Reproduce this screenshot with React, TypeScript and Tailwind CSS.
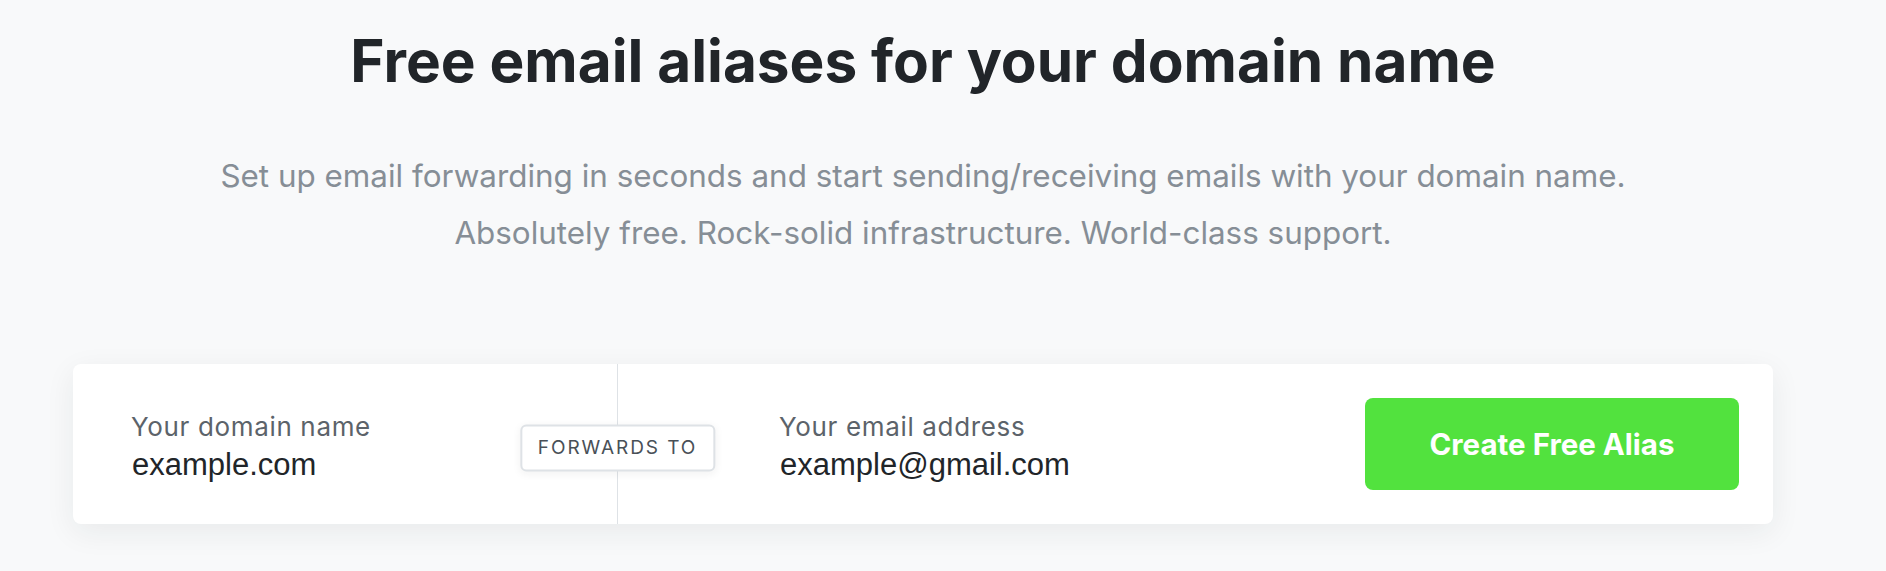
import React from 'react';

const inter = { fontFamily: 'Inter, "Noto Sans", sans-serif' };

function Field({ label, placeholder }: { label: string; placeholder: string }) {
    return (
        <div className="flex flex-col justify-center pt-[6px]">
            <label className="text-[26px] leading-[36px] tracking-[0.025em] text-[#5c636a]">{label}</label>
            <input
                type="text"
                placeholder={placeholder}
                className="h-[40px] w-[400px] pl-[1px] bg-transparent outline-none text-[31px] text-[#212529] placeholder:text-[#212529]"
                style={{ fontFamily: '"Liberation Sans", Arial, sans-serif' }}
            />
        </div>
    );
}

export default function App() {
    return (
        <div className="min-h-[571px] bg-[#f8f9fa]" style={inter}>
            <div className="w-[1846px] pt-[26px]">
                {/* Hero */}
                <h1 className="text-center text-[58.5px] leading-[1.2] font-bold text-[#212529]">
                    Free email aliases for your domain name
                </h1>
                <p className="mt-[52px] text-center text-[31.4px] leading-[57px] text-[#868e96]">
                    Set up email forwarding in seconds and start sending/receiving emails with your domain name.
                    <br />
                    Absolutely free. Rock-solid infrastructure. World-class support.
                </p>

                {/* Alias form */}
                <form className="mx-auto mt-[102px] w-[1700px] h-[160px] flex bg-white rounded-[8px] shadow-[0_8px_30px_rgba(33,37,41,0.07)]">
                    <div className="w-[544px] pl-[58px] flex">
                        <Field label="Your domain name" placeholder="example.com" />
                    </div>

                    <div className="relative w-px bg-[#dee2e6]">
                        <span className="absolute left-1/2 top-[calc(50%+4px)] -translate-x-1/2 -translate-y-1/2 whitespace-nowrap bg-white border-2 border-[#dee2e6] rounded-[6px] px-[16px] h-[47px] flex items-center text-[19px] tracking-[0.1em] text-[#495057] shadow-[0_2px_8px_rgba(33,37,41,0.06)]">
                            FORWARDS TO
                        </span>
                    </div>

                    <div className="flex-1 pl-[161px] flex">
                        <Field label="Your email address" placeholder="example@gmail.com" />
                    </div>

                    <div className="p-[34px]">
                        <button
                            type="button"
                            className="w-[374px] h-[92px] rounded-[8px] bg-[#52e23e] text-white text-[29.5px] font-bold"
                        >
                            Create Free Alias
                        </button>
                    </div>
                </form>
            </div>
        </div>
    );
}
